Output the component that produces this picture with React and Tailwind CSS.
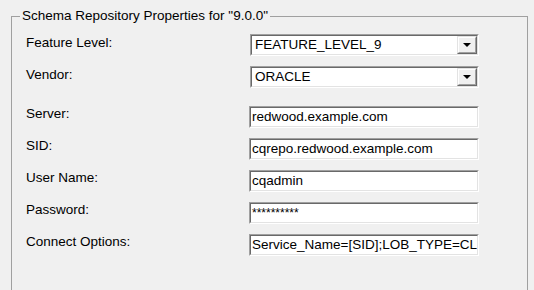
import React from "react";

function Sunken({ className = "", children }) {
  return (
    <div className={"border border-t-[#a0a0a0] border-l-[#a0a0a0] border-b-white border-r-white " + className}>
      <div className="h-full border border-t-[#696969] border-l-[#696969] border-b-[#e3e3e3] border-r-[#e3e3e3] bg-white flex items-center overflow-hidden">
        {children}
      </div>
    </div>
  );
}

function Combo({ value }) {
  return (
    <Sunken className="h-[22px] w-[229px] ml-[1px]">
      <div className="flex-1 pl-[3px] whitespace-nowrap overflow-hidden leading-[16px]">{value}</div>
      <div className="h-[18px] w-[20px] border border-t-[#e3e3e3] border-l-[#e3e3e3] border-b-[#696969] border-r-[#696969]">
        <div className="h-full border border-t-white border-l-white border-b-[#a0a0a0] border-r-[#a0a0a0] bg-[#f0f0f0] flex items-center justify-center">
          <svg width="8" height="4" viewBox="0 0 8 4">
            <polygon points="0,0 8,0 4,4" fill="#000" />
          </svg>
        </div>
      </div>
    </Sunken>
  );
}

function Field({ value, small }) {
  return (
    <Sunken className="h-[22px] w-[230px]">
      <div className={"pl-[1px] whitespace-nowrap overflow-hidden leading-[16px] " + (small ? "self-start text-[12px] pt-[1px]" : "")}>
        {value}
      </div>
    </Sunken>
  );
}

export default function App() {
  const rows = [
    ["Server:", "redwood.example.com"],
    ["SID:", "cqrepo.redwood.example.com"],
    ["User Name:", "cqadmin"],
    ["Password:", "**********", true],
    ["Connect Options:", "Service_Name=[SID];LOB_TYPE=CLOB;LOB_CACHE=Y"],
  ];
  return (
    <div
      className="w-[534px] h-[290px] bg-[#f0f0f0] overflow-hidden text-black text-[13.5px] leading-[16px]"
      style={{ fontFamily: '"Liberation Sans", Arial, sans-serif' }}
    >
      <fieldset className="ml-[11px] mt-[8px] w-[517px] h-[400px] border border-[#a0a0a0] pt-[10px]">
        <legend className="ml-[8px] px-[2px] leading-[16px]">Schema Repository Properties for "9.0.0"</legend>
        <div className="pl-[14px]">
          <div className="grid grid-cols-[223px_230px] gap-y-[10px]">
            <div className="pt-[1px]">Feature Level:</div>
            <Combo value="FEATURE_LEVEL_9" />
            <div className="pt-[1px]">Vendor:</div>
            <Combo value="ORACLE" />
          </div>
          <div className="grid grid-cols-[223px_230px] gap-y-[10px] mt-[18px]">
            {rows.map(([l, v, s]) => (
              <React.Fragment key={l}>
                <div>{l}</div>
                <Field value={v} small={s} />
              </React.Fragment>
            ))}
          </div>
        </div>
      </fieldset>
    </div>
  );
}
